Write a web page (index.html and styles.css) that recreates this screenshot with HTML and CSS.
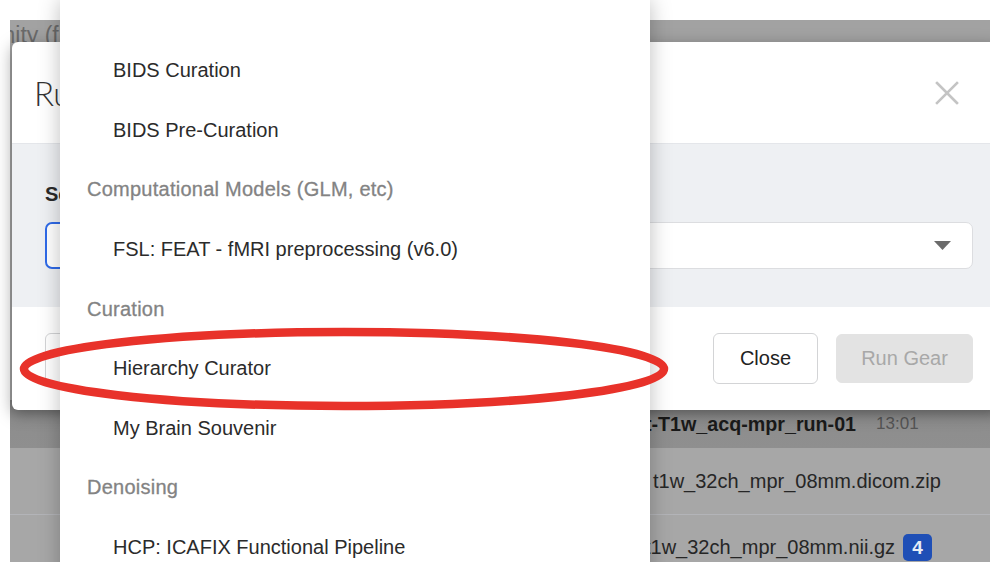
FILE: index.html
```html
<!DOCTYPE html>
<html lang="en">
<head>
<meta charset="utf-8">
<title>Run Gear</title>
<link rel="stylesheet" href="styles.css">
</head>
<body>
<div class="stage">
  <div class="shot">
    <div class="page-title">Community (fMRI)</div>
    <div class="list">
      <div class="row row-head">
        <span class="name name-bold">anat-T1w_acq-mpr_run-01</span>
        <span class="time">13:01</span>
      </div>
      <div class="row row-file">
        <span class="name name-zip">t1w_32ch_mpr_08mm.dicom.zip</span>
      </div>
      <div class="row row-file">
        <span class="name">t1w_32ch_mpr_08mm.nii.gz</span>
        <span class="badge">4</span>
      </div>
    </div>
  </div>

  <div class="modal">
    <div class="modal-header">
      <h2 class="modal-title">Run Gear</h2>
      <svg class="close-icon" width="24" height="24" viewBox="0 0 24 24"><path d="M2 2 L22 22 M22 2 L2 22" stroke="#c4c4c4" stroke-width="2.6" stroke-linecap="square" fill="none"/></svg>
    </div>
    <div class="modal-body">
      <label class="field-label">Select a Gear</label>
      <div class="control-row">
        <div class="search"></div>
        <div class="select">
          <svg width="17" height="9" viewBox="0 0 17 9"><path d="M0 0 H17 L8.5 9 Z" fill="#6b6b6b"/></svg>
        </div>
      </div>
    </div>
    <div class="modal-footer">
      <button class="btn">Back</button>
      <div class="actions">
        <button class="btn">Close</button>
        <button class="btn btn-disabled">Run Gear</button>
      </div>
    </div>
  </div>

  <div class="menu">
    <div class="opt">BIDS Curation</div>
    <div class="opt">BIDS Pre-Curation</div>
    <div class="grp">Computational Models (GLM, etc)</div>
    <div class="opt">FSL: FEAT - fMRI preprocessing (v6.0)</div>
    <div class="grp">Curation</div>
    <div class="opt">Hierarchy Curator</div>
    <div class="opt">My Brain Souvenir</div>
    <div class="grp">Denoising</div>
    <div class="opt">HCP: ICAFIX Functional Pipeline</div>
  </div>

  <svg class="ring" width="990" height="562" viewBox="0 0 990 562">
    <ellipse cx="344" cy="369" rx="320" ry="37" fill="none" stroke="#e8322a" stroke-width="8.5"/>
  </svg>
</div>
</body>
</html>
```

FILE: styles.css
```css
* { box-sizing: border-box; }

html, body {
  margin: 0;
  padding: 0;
  background: #ffffff;
}

body {
  font-family: "Liberation Sans", Arial, sans-serif;
  color: #333;
}

.stage {
  position: relative;
  width: 990px;
  height: 562px;
  overflow: hidden;
  padding: 20px 0 0 10px;
  background: #ffffff;
}

/* dimmed page behind the modal */
.shot {
  width: 980px;
  height: 542px;
  background: #a2a2a2;
  overflow: hidden;
}

.page-title {
  margin-left: -88px;
  padding-top: 2px;
  font-size: 23px;
  line-height: 26px;
  color: #6a6a6a;
  white-space: nowrap;
}

.list {
  margin-top: 352px;
}

.row {
  display: flex;
  align-items: center;
  padding-left: 601px;
  white-space: nowrap;
}

.row-head {
  height: 48px;
  background: linear-gradient(#7c7c7c, #8d8d8d 40%, #8f8f8f);
}

.row-file {
  height: 66px;
  background: #a7a7a7;
  border-top: 1px solid #b3b4b8;
  padding-left: 635px;
}

.row-head + .row-file {
  border-top: none;
}

.name {
  font-size: 20px;
  color: #262626;
}

.name-bold {
  font-weight: bold;
  font-size: 19.7px;
  color: #1a1a1a;
}

.name-zip {
  margin-left: 8px;
}

.time {
  margin-left: 20px;
  font-size: 17px;
  color: #555;
}

.badge {
  margin-left: 8px;
  width: 29px;
  height: 27px;
  border-radius: 5px;
  background: #1f4fb6;
  color: #e8ecf5;
  font-weight: bold;
  font-size: 19px;
  display: flex;
  align-items: center;
  justify-content: center;
}

/* modal */
.modal {
  position: absolute;
  left: 12px;
  top: 42px;
  width: 989px;
  height: 368px;
  background: #fff;
  border-radius: 6px;
  box-shadow: 0 4px 16px rgba(0, 0, 0, 0.35);
  display: flex;
  flex-direction: column;
  overflow: hidden;
}

.modal-header {
  height: 102px;
  display: flex;
  align-items: center;
  justify-content: space-between;
  padding: 0 42px 0 22px;
  border-bottom: 1px solid #e4e6ea;
}

.modal-title {
  margin: 0;
  font-family: Lato, "Liberation Sans", sans-serif;
  font-weight: 300;
  font-size: 33px;
  color: #333;
}

.close-icon {
  display: block;
}

.modal-body {
  height: 163px;
  background: #eef0f3;
  padding: 38px 28px 0 33px;
}

.field-label {
  display: block;
  font-size: 20px;
  font-weight: bold;
  line-height: 24px;
  color: #2a2a2a;
  margin-bottom: 16px;
}

.control-row {
  display: flex;
  gap: 10px;
}

.search {
  width: 400px;
  height: 47px;
  border: 2.5px solid #2f6ae8;
  border-radius: 7px;
  background: #fff;
}

.select {
  flex: 1;
  height: 47px;
  border: 1px solid #dcdde0;
  border-radius: 7px;
  background: #fff;
  display: flex;
  align-items: center;
  justify-content: flex-end;
  padding-right: 21px;
}

.select svg {
  display: block;
}

.modal-footer {
  flex: 1;
  display: flex;
  align-items: flex-start;
  justify-content: space-between;
  padding: 26px 28px 0 33px;
}

.actions {
  display: flex;
  gap: 18px;
  align-items: center;
}

.btn {
  font-family: "Liberation Sans", Arial, sans-serif;
  font-size: 20px;
  height: 51px;
  padding: 0 22px;
  border: 1px solid #d3d4d6;
  border-radius: 6px;
  background: #fff;
  color: #222;
}

.actions .btn:first-child {
  width: 105px;
  padding: 0;
}

.btn-disabled {
  width: 137px;
  height: 49px;
  padding: 0;
  background: #e3e3e3;
  border-color: #e3e3e3;
  color: #a8a8a8;
}

/* dropdown menu */
.menu {
  position: absolute;
  left: 60px;
  top: 0;
  width: 590px;
  height: 600px;
  background: #fff;
  box-shadow: 0 0 20px rgba(0, 0, 0, 0.26);
  padding-top: 41px;
}

.opt,
.grp {
  height: 59.6px;
  display: flex;
  align-items: center;
  font-size: 20px;
  white-space: nowrap;
}

.opt {
  padding-left: 53px;
  color: #2b2b2b;
}

.grp {
  padding-left: 27px;
  color: #838383;
  letter-spacing: 0.25px;
  -webkit-text-stroke: 0.3px #838383;
}

/* annotation */
.ring {
  position: absolute;
  left: 0;
  top: 0;
  pointer-events: none;
}
```
